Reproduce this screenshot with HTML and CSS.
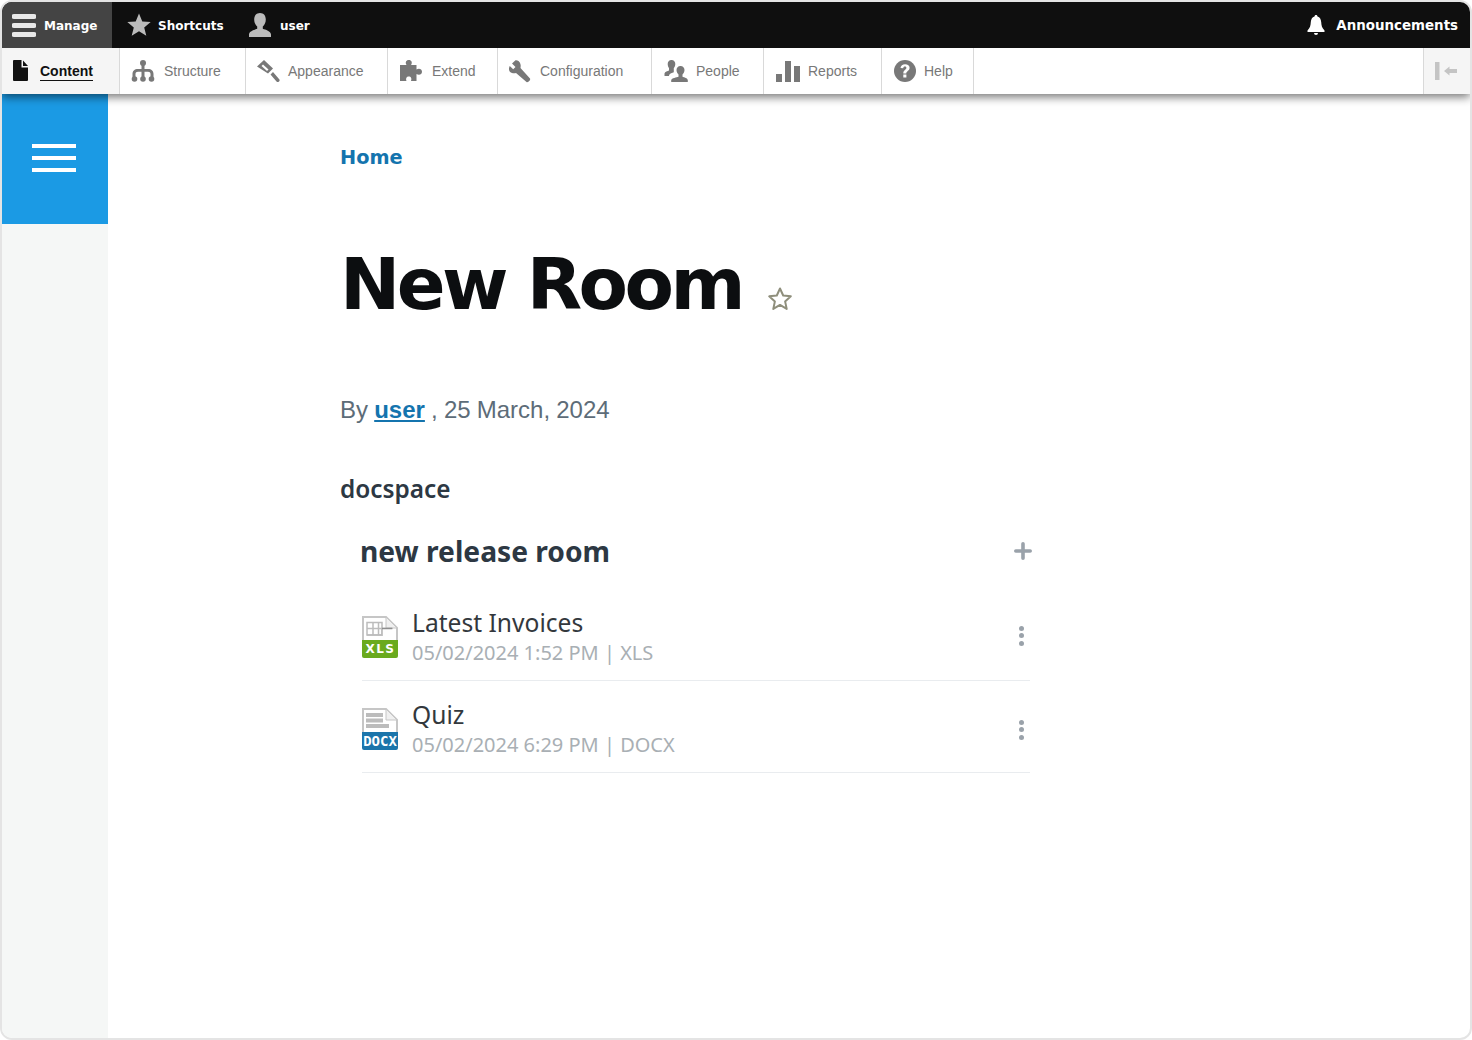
FILE: index.html
```html
<!DOCTYPE html>
<html lang="en">
<head>
  <meta charset="UTF-8" />
  <title>New Room</title>
  <link rel="stylesheet" href="styles.css">
</head>
<body>

<div class="frame">
  <header class="toolbar">
    <div class="bar">
      <a class="bar-item manage">
        <svg width="24" height="24" viewBox="0 0 24 24"><path d="M2 1h20a1.500 1.500 0 0 1 0 5H2a1.500 1.500 0 0 1 0-5zM2 10h20a1.500 1.500 0 0 1 0 5H2a1.500 1.500 0 0 1 0-5zM2 19h20a1.500 1.500 0 0 1 0 5H2a1.500 1.500 0 0 1 0-5z" fill="#e8e8e8"/></svg>
        <span class="bar-label">Manage</span>
      </a>
      <a class="bar-item shortcuts">
        <svg width="24" height="24" viewBox="0 0 24 24"><path d="M12 .5l3.300 8 8.400.6-6.500 5.400 2.100 8.300L12 18.300l-7.300 4.500 2.100-8.300L.3 9.100l8.400-.6z" fill="#bbb"/></svg>
        <span class="bar-label">Shortcuts</span>
      </a>
      <a class="bar-item user">
        <svg width="24" height="24" viewBox="0 0 24 24"><path d="M12 0c3.800 0 5.800 2.800 5.800 6.500 0 3-1.300 5.600-3 7v2.300c2.700 1 8 2.300 8.200 5.700v2.500H1v-2.500c.2-3.400 5.500-4.700 8.200-5.700v-2.300c-1.700-1.400-3-4-3-7C6.200 2.800 8.200 0 12 0z" fill="#bbb"/></svg>
        <span class="bar-label">user</span>
      </a>
      <a class="bar-item announce">
        <svg width="18" height="20" viewBox="0 0 18 20"><path d="M9 0c1 0 1.400.6 1.500 1.500C13 2.300 14 4.500 14.200 7c.2 3.500.8 6 3.300 8.500V17H.5v-1.500C3 13 3.600 10.500 3.800 7 4 4.500 5 2.300 7.500 1.500 7.600.6 8 0 9 0zM7 18h4a2 2 0 0 1-4 0z" fill="#fff"/></svg>
        Announcements
      </a>
    </div>
    <nav class="tray">
      <a class="tray-item active w-content">
        <svg width="20" height="24" viewBox="0 0 20 24"><path d="M3 1h7.500v7.500H17V21a1 1 0 0 1-1 1H3a1 1 0 0 1-1-1V2a1 1 0 0 1 1-1zM12 1.500L17 7h-5z" fill="#111"/></svg>
        <span class="tray-label">Content</span>
      </a>
      <a class="tray-item w-structure">
        <svg width="24" height="24" viewBox="0 0 24 24"><circle cx="12" cy="4" r="3" fill="#787878"/><circle cx="3.500" cy="20" r="2.800" fill="#787878"/><circle cx="12" cy="20" r="2.800" fill="#787878"/><circle cx="20.500" cy="20" r="2.800" fill="#787878"/><path d="M10.500 6h3v4h3.500c3.500 0 5.500 2 5.500 5v3h-3v-3c0-1.300-1-2.200-2.500-2.200h-3.500V18h-3v-5.200H7c-1.500 0-2.500.9-2.500 2.200v3h-3v-3c0-3 2-5 5.500-5h3.500z" fill="#787878"/></svg>
        Structure
      </a>
      <a class="tray-item w-appearance">
        <svg width="24" height="24" viewBox="0 0 24 24"><path d="M8 1l9 8.500-5 5L1 7.500z" fill="#787878"/><path d="M5.500 7l5.500 5 1.500-1.500-5.500-5z" fill="#fff"/><path d="M14.500 15.500l2.500-2.500 6 7a1.700 1.700 0 0 1-2.500 2.500z" fill="#787878"/></svg>
        Appearance
      </a>
      <a class="tray-item w-extend">
        <svg width="24" height="24" viewBox="0 0 24 24"><path d="M1 6h6.500C6 3.500 7 1 9.800 1s3.800 2.500 2.300 5H17.500v4.500c2.500-1.500 5.500-.5 5.500 2.300s-3 3.800-5.500 2.300V22H12c1-2.500 0-4.500-2.200-4.500S6.500 19.500 7.500 22H1z" fill="#787878"/></svg>
        Extend
      </a>
      <a class="tray-item w-config">
        <svg width="24" height="24" viewBox="0 0 24 24"><path d="M7.500 1.200L4 4.500l3.500 3.600-2.300 2.200L1.800 7C.2 10 1 13 4 14c1.500.5 3 .3 4 0l10.500 9c1.500 1 4.500-2 3.500-3.500L12.500 9c.7-3-.2-5.500-2-7-.9-.7-2-1-3-.8z" fill="#787878"/></svg>
        Configuration
      </a>
      <a class="tray-item w-people">
        <svg width="24" height="24" viewBox="0 0 24 24"><path d="M7.500 1C10 1 11.300 2.800 11.300 5c0 1.500-.6 3-1.500 4v4.200l-2 .8C6 14.800 5 15.500 5 17H.5v-2.500c.3-1.800 3.300-2.300 4.500-3V9C4.200 8 3.700 6.500 3.700 5 3.700 2.800 5 1 7.500 1z" fill="#787878"/><path d="M16.500 7c2.500 0 4 1.800 4 4 0 1.800-.8 3.400-2 4.400v2.300c1.700.7 5 1.400 5.300 3.300v2H7.200v-2c.3-1.900 5.600-2.600 7.300-3.300v-2.300c-1.200-1-2-2.600-2-4.400 0-2.200 1.500-4 4-4z" fill="#787878"/></svg>
        People
      </a>
      <a class="tray-item w-reports">
        <svg width="24" height="24" viewBox="0 0 24 24"><path d="M0 15h6v8H0zM9 2h6v21H9zM18 7h6v16h-6z" fill="#787878"/></svg>
        Reports
      </a>
      <a class="tray-item w-help">
        <svg width="24" height="24" viewBox="0 0 24 24"><circle cx="12" cy="12" r="11" fill="#787878"/><path d="M7.500 9c.2-2.300 2.100-3.800 4.600-3.800 2.700 0 4.500 1.400 4.500 3.600 0 3.200-3.300 3.200-3.300 5.700h-3c0-3.600 3.100-3.800 3.100-5.500 0-.9-.6-1.400-1.500-1.400-1 0-1.600.7-1.700 1.700zM10.300 15.500h3.100v3h-3.100z" fill="#fff"/></svg>
        Help
      </a>
      <a class="collapse">
        <svg width="24" height="24" viewBox="0 0 24 24"><path d="M1 3h4.500v18H1zM10 12l5.500-4.500V10H23v4h-7.500v2.500z" fill="#c4c4c4"/></svg>
      </a>
    </nav>
  </header>

  <div class="page">
    <aside class="sidebar">
      <div class="menu-btn">
        <span class="menu-line"></span>
        <span class="menu-line"></span>
        <span class="menu-line"></span>
      </div>
    </aside>

    <main class="content">
      <a class="crumb">Home</a>
      <div class="title-row">
        <h1>New Room</h1>
        <svg class="fav" width="26" height="26" viewBox="0 0 26 26"><path d="M13 2.500l3.200 7 7.600.8-5.700 5.100 1.600 7.500L13 18.900l-6.700 4 1.600-7.500-5.700-5.100 7.600-.8z" fill="none" stroke="#8f8f7c" stroke-width="2" stroke-linejoin="round"/></svg>
      </div>
      <p class="byline">By <a class="author">user</a> , 25 March, 2024</p>
      <h2 class="space-name">docspace</h2>

      <section class="room">
        <div class="room-head">
          <h3>new release room</h3>
          <svg width="18" height="18" viewBox="0 0 20 20"><path d="M8 2a2 2 0 0 1 4 0v6h6a2 2 0 0 1 0 4h-6v6a2 2 0 0 1-4 0v-6H2a2 2 0 0 1 0-4h6z" fill="#9aa2aa"/></svg>
        </div>

        <div class="file">
          <div class="file-icon">
            <svg class="sheet" width="36" height="24" viewBox="0 0 36 24"><path d="M1 24V1h23l11 11v12" fill="#fff" stroke="#c6c6c6" stroke-width="2"/><path d="M24 1v11h11z" fill="#f0f0f0" stroke="#c6c6c6" stroke-width="1"/><path d="M5 6.500h15v12.500H5zM5 12.500h26M11 6.500v12.500M16.500 6.500v12.500" fill="none" stroke="#bcbcbc" stroke-width="1.500"/><path d="M20.500 13h10v6h-10z" fill="#fff"/><path d="M5 19h15v-6.500" fill="none" stroke="#bcbcbc" stroke-width="1.500"/><path d="M20 12.500h10" stroke="#8f8f8f" stroke-width="1.500"/></svg>
            <span class="badge xls">XLS</span>
          </div>
          <div class="file-text">
            <div class="file-name">Latest Invoices</div>
            <div class="file-meta">05/02/2024 1:52 PM | XLS</div>
          </div>
          <div class="kebab"><i></i><i></i><i></i></div>
        </div>

        <div class="file">
          <div class="file-icon">
            <svg class="sheet" width="36" height="24" viewBox="0 0 36 24"><path d="M1 24V1h23l11 11v12" fill="#fff" stroke="#c6c6c6" stroke-width="2"/><path d="M24 1v11h11z" fill="#f0f0f0" stroke="#c6c6c6" stroke-width="1"/><path d="M4 5h17v4H4zM4 10.500h17v4H4zM4 16h23v4H4z" fill="#bcbcbc"/></svg>
            <span class="badge docx">DOCX</span>
          </div>
          <div class="file-text">
            <div class="file-name">Quiz</div>
            <div class="file-meta">05/02/2024 6:29 PM | DOCX</div>
          </div>
          <div class="kebab"><i></i><i></i><i></i></div>
        </div>
      </section>
    </main>
  </div>
</div>

</body>
</html>
```

FILE: styles.css
```css
html, body { margin: 0; padding: 0; background: #fff; }
body { width: 1472px; height: 1040px; overflow: hidden; font-family: "Liberation Sans", Arial, sans-serif; }
* { box-sizing: border-box; }

.frame { width: 1472px; height: 1040px; border: 2px solid #e4e4e4; border-radius: 12px; overflow: hidden; display: flex; flex-direction: column; background: #fff; }

.toolbar { height: 92px; flex: none; box-shadow: 0 3px 9px rgba(0,0,0,.55); position: relative; z-index: 2; }
.bar { height: 46px; background: #0f0f0f; display: flex; align-items: center; color: #fff; font-family: "DejaVu Sans", sans-serif; font-weight: bold; font-size: 12px; }
.bar-item { display: flex; align-items: center; height: 46px; }
.bar-item svg { flex: none; }
.bar-label { margin-top: 2px; }
.manage { width: 110px; background: #444; padding-left: 10px; gap: 8px; }
.shortcuts { padding-left: 15px; gap: 7px; width: 136px; }
.user { gap: 8px; padding-left: 0; }
.announce { margin-left: auto; gap: 11px; padding-right: 12px; font-size: 13.4px; }

.tray { height: 46px; background: #fff; display: flex; font-size: 14px; color: #787878; }
.tray-item { display: flex; align-items: center; gap: 9px; padding-left: 10px; border-right: 1px solid #d9d9d9; }
.tray-item svg { flex: none; }
.active { background: #f5f5f5; color: #111; font-weight: bold; padding-left: 9px; gap: 9px; }
.tray-label { border-bottom: 1px solid #111; line-height: 17px; margin-top: 2px; }
.w-content { width: 118px; }
.w-structure { width: 126px; padding-left: 11px; }
.w-appearance { width: 142px; padding-left: 10px; gap: 8px; }
.w-extend { width: 110px; padding-left: 11px; gap: 9px; }
.w-config { width: 154px; padding-left: 10px; gap: 8px; }
.w-people { width: 112px; padding-left: 12px; gap: 8px; }
.w-reports { width: 118px; padding-left: 12px; gap: 8px; }
.w-help { width: 92px; padding-left: 11px; gap: 7px; }
.collapse { margin-left: auto; width: 47px; padding-right: 2px; background: #f5f5f5; border-left: 1px solid #d9d9d9; display: flex; align-items: center; justify-content: center; }

.page { flex: 1; display: flex; min-height: 0; }
.sidebar { width: 106px; flex: none; background: #f5f7f6; }
.menu-btn { height: 130px; background: #1b9ae4; display: flex; flex-direction: column; gap: 8px; padding: 50px 0 0 30px; }
.menu-line { display: block; width: 44px; height: 4px; background: #fff; }

.content { padding: 49px 0 0 232px; width: 924px; }
.crumb { display: block; color: #1474ae; font-family: "DejaVu Sans", sans-serif; font-weight: bold; font-size: 19.3px; line-height: 30px; }
.title-row { display: flex; align-items: flex-end; margin-top: 66px; height: 90px; }
.title-row h1 { margin: 0; font-family: "DejaVu Sans", sans-serif; font-weight: bold; font-size: 72px; line-height: 90px; color: #0c0e10; letter-spacing: -3.5px; }
.fav { margin: 0 0 17px 25px; }
.byline { margin: 0; padding-top: 64px; font-size: 24px; line-height: 34px; color: #5d6c78; word-spacing: -.5px; }
.author { color: #1474ae; font-weight: bold; text-decoration: underline; }
.space-name { margin: 0; padding-top: 44px; font-family: "Noto Sans", sans-serif; font-weight: 600; font-size: 24.4px; line-height: 36px; color: #2d3843; }

.room { width: 692px; padding: 0 0 0 20px; }
.room-head { display: flex; align-items: center; justify-content: space-between; height: 82px; padding: 24px 0 18px; }
.room-head h3 { margin: 0; font-family: "Noto Sans", sans-serif; font-weight: 700; font-size: 28.2px; line-height: 40px; color: #2d3843; }

.file { display: flex; align-items: center; height: 92px; margin-left: 2px; margin-right: 2px; padding-top: 4px; border-bottom: 1px solid #e9ecef; }
.file-icon { width: 36px; margin-right: 14px; flex: none; display: flex; flex-direction: column; }
.sheet { display: block; }
.badge { display: block; height: 18px; border-radius: 0 0 2px 2px; font-family: "DejaVu Sans Mono", monospace; font-weight: bold; color: #fff; text-align: center; font-size: 13px; line-height: 18px; }
.xls { background: #6aaa1e; letter-spacing: 1.5px; padding-left: 1px; font-family: "DejaVu Sans", sans-serif; font-size: 12px; }
.docx { background: #1b75ab; font-size: 14px; letter-spacing: 0; }
.file-text { flex: 1; font-family: "Noto Sans", sans-serif; }
.file-name { font-size: 24.6px; line-height: 32px; color: #33383d; }
.file-meta { font-size: 20px; line-height: 28px; color: #a9afb4; }
.kebab { width: 5px; margin-right: 6px; margin-top: -2px; display: flex; flex-direction: column; gap: 2.5px; }
.file + .file .kebab { margin-top: 2px; }
.kebab i { display: block; width: 5px; height: 5px; border-radius: 50%; background: #9aa2aa; }
```
